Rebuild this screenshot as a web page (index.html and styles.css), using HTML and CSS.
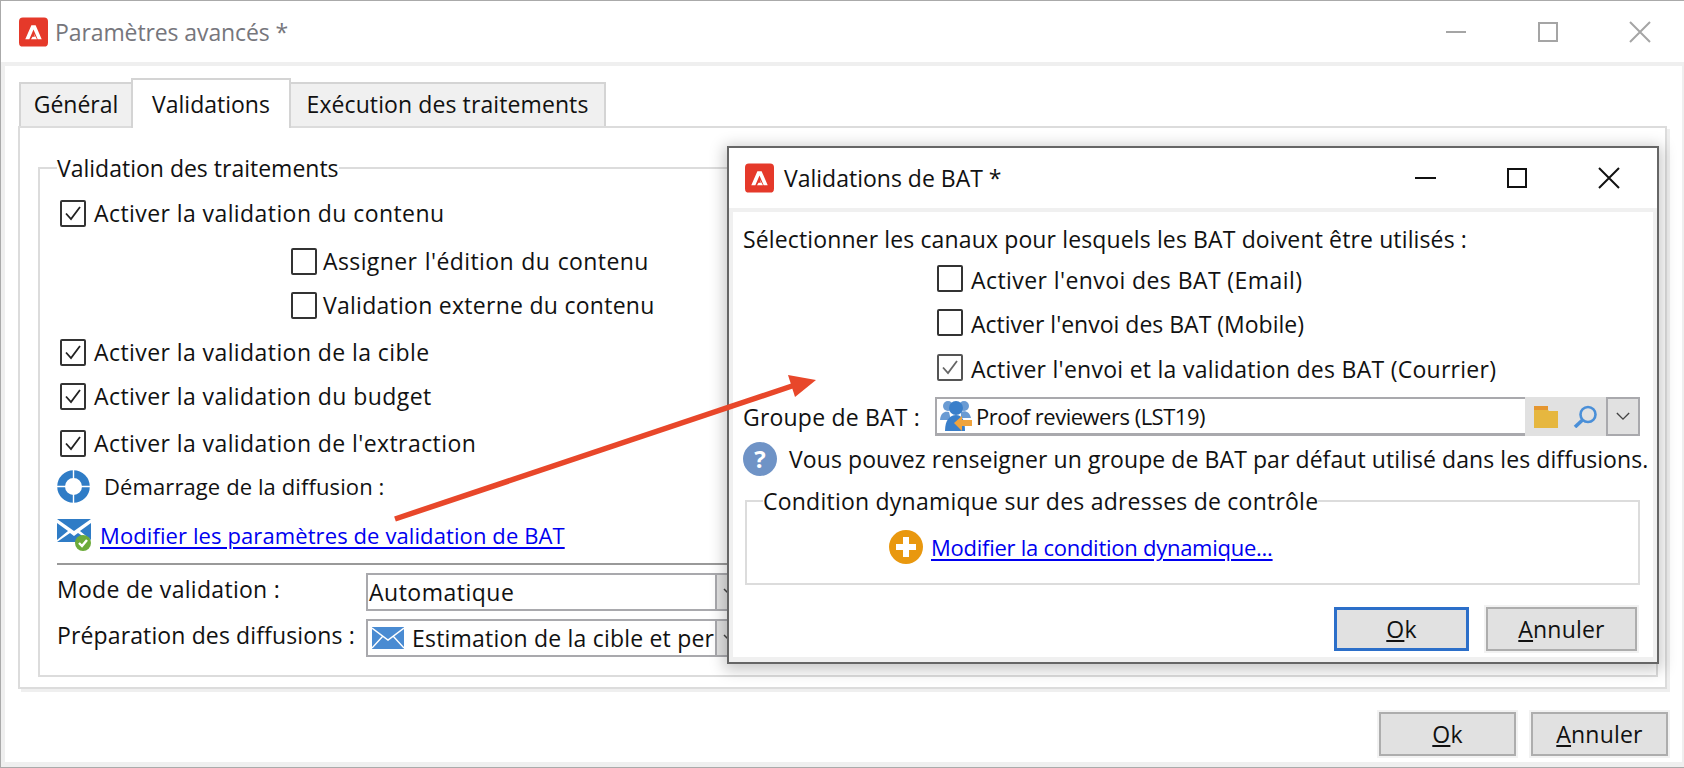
FILE: index.html
```html
<!DOCTYPE html>
<html lang="fr">
<head>
<meta charset="utf-8">
<title>Paramètres avancés</title>
<link rel="stylesheet" href="styles.css">
</head>
<body>
<div class="window">
  <header class="titlebar">
    <svg class="logo" viewBox="0 0 30 30"><rect width="30" height="30" rx="4" fill="#e5392a"/><path d="M12.8 8H17.2L23.5 22.5H19.3L15 12.5 10.7 22.5H6.5Z M15.2 16.5 18.6 22.5H12.4L14 19.8H16.4Z" fill="#fff"/></svg>
    <span class="title title-muted">Paramètres avancés *</span>
    <div class="controls controls-muted">
      <svg viewBox="0 0 20 20"><path d="M0 10H20"/></svg>
      <svg viewBox="0 0 20 20"><path d="M1 1H19V19H1Z"/></svg>
      <svg viewBox="0 0 20 20"><path d="M0 0L20 20M20 0L0 20"/></svg>
    </div>
  </header>

  <div class="content">
    <nav class="tabs">
      <div class="tab tab-general">Général</div>
      <div class="tab tab-active">Validations</div>
      <div class="tab tab-exec">Exécution des traitements</div>
    </nav>
    <section class="pane">
      <fieldset class="group group-main">
        <legend>Validation des traitements</legend>
        <div class="main-rows">
          <label class="row row-check"><span class="box"><svg viewBox="0 0 22 23"><path d="M4 11.5L9 17 18 5"/></svg></span>Activer la validation du contenu</label>
          <label class="row row-indent row-spaced"><span class="box"></span>Assigner l'édition du contenu</label>
          <label class="row row-indent row-loose"><span class="box"></span>Validation externe du contenu</label>
          <label class="row row-check"><span class="box"><svg viewBox="0 0 22 23"><path d="M4 11.5L9 17 18 5"/></svg></span>Activer la validation de la cible</label>
          <label class="row row-check"><span class="box"><svg viewBox="0 0 22 23"><path d="M4 11.5L9 17 18 5"/></svg></span>Activer la validation du budget</label>
          <label class="row row-check"><span class="box"><svg viewBox="0 0 22 23"><path d="M4 11.5L9 17 18 5"/></svg></span>Activer la validation de l'extraction</label>
          <div class="row row-icon">
            <svg class="ic-buoy" viewBox="0 0 33 33"><circle cx="16.5" cy="16.5" r="12.4" fill="none" stroke="#2f7cc6" stroke-width="7.8"/><path d="M16.5 0V9M16.5 24V33M0 16.5H9M24 16.5H33" stroke="#fff" stroke-width="1.4"/></svg>
            <span class="text-small">Démarrage de la diffusion :</span>
          </div>
          <div class="row row-link">
            <svg class="ic-mailok" viewBox="0 0 34 32"><path d="M0 0H34L17 12Z" fill="#2f7cc6"/><path d="M0 4L11 12 0 21ZM34 4V21L23 12Z" fill="#2f7cc6"/><path d="M0 23L13 14 17 17 21 14 27 18 20 23Z" fill="#2f7cc6"/><circle cx="26" cy="24" r="8" fill="#6cab3a"/><path d="M22 24L25 27 30 21" fill="none" stroke="#fff" stroke-width="2.4"/></svg>
            <a class="link text-small" href="#">Modifier les paramètres de validation de BAT</a>
          </div>
          <hr class="sep">
          <div class="row row-field">
            <span class="field-label">Mode de validation :</span>
            <div class="select"><span class="select-value select-value-wide">Automatique</span><span class="select-arrow"><svg viewBox="0 0 12 8"><path d="M1 1L6 6 11 1"/></svg></span></div>
          </div>
          <div class="row row-field">
            <span class="field-label field-label-tight">Préparation des diffusions :</span>
            <div class="select"><span class="select-value select-value-icon"><svg class="ic-mail" viewBox="0 0 32 22"><rect width="32" height="22" fill="#4a8bd2"/><path d="M0 1L16 13 32 1M0 21L11 9M32 21L21 9" fill="none" stroke="#fff" stroke-width="1.4"/></svg>Estimation de la cible et per</span><span class="select-arrow"><svg viewBox="0 0 12 8"><path d="M1 1L6 6 11 1"/></svg></span></div>
          </div>
        </div>
      </fieldset>
    </section>
    <footer class="actions actions-main">
      <button class="btn" type="button"><u>O</u>k</button>
      <button class="btn" type="button"><u>A</u>nnuler</button>
    </footer>
  </div>

  <div class="modal">
    <header class="titlebar titlebar-modal">
      <svg class="logo" viewBox="0 0 30 30"><rect width="30" height="30" rx="4" fill="#e5392a"/><path d="M12.8 8H17.2L23.5 22.5H19.3L15 12.5 10.7 22.5H6.5Z M15.2 16.5 18.6 22.5H12.4L14 19.8H16.4Z" fill="#fff"/></svg>
      <span class="title">Validations de BAT *</span>
      <div class="controls">
        <svg viewBox="0 0 20 20"><path d="M0 10H21"/></svg>
        <svg viewBox="0 0 20 20"><path d="M1 1H19V19H1Z"/></svg>
        <svg viewBox="0 0 20 20"><path d="M0 0L20 20M20 0L0 20"/></svg>
      </div>
    </header>
    <div class="modal-body">
      <div class="row row-intro">Sélectionner les canaux pour lesquels les BAT doivent être utilisés :</div>
      <label class="row row-channel row-check"><span class="box"></span>Activer l'envoi des BAT (Email)</label>
      <label class="row row-channel"><span class="box"></span>Activer l'envoi des BAT (Mobile)</label>
      <label class="row row-channel row-loose"><span class="box box-muted"><svg viewBox="0 0 22 23"><path d="M4 11.5L9 17 18 5"/></svg></span>Activer l'envoi et la validation des BAT (Courrier)</label>
      <div class="row row-lookup">
        <span class="lookup-label">Groupe de BAT :</span>
        <div class="lookup">
          <div class="lookup-input">
            <svg class="ic-group" viewBox="0 0 34 32"><circle cx="9" cy="6" r="5" fill="#6a9bd3"/><circle cx="25" cy="6" r="5" fill="#6a9bd3"/><path d="M1 20C2 12 6 11 10 12L12 20ZM22 12C27 10 31 13 32 18L22 18Z" fill="#6a9bd3"/><circle cx="17" cy="8" r="7" fill="#3a7fca"/><path d="M6 31C6 20 11 15 17 15 23 15 26 20 26 31Z" fill="#3a7fca"/><path d="M15 23L23 16V20H33V26H23V31Z" fill="#f0a33c"/></svg>
            <span class="text-proof">Proof reviewers (LST19)</span>
          </div>
          <div class="lookup-tools">
            <svg class="ic-folder" viewBox="0 0 24 22"><path d="M0 0H14V4H0Z" fill="#e5962f"/><path d="M0 4H14L15 5H24V22H0Z" fill="#e6b73f"/></svg>
            <svg class="ic-search" viewBox="0 0 25 23"><circle cx="15" cy="9.5" r="7.5" fill="none" stroke="#4a8fd8" stroke-width="2.6"/><path d="M9.5 15L2 22" stroke="#4a8fd8" stroke-width="3.6"/></svg>
          </div>
          <div class="lookup-arrow"><svg viewBox="0 0 16 10"><path d="M1 1L8 8 15 1"/></svg></div>
        </div>
      </div>
      <div class="row row-help"><span class="ic-help">?</span>Vous pouvez renseigner un groupe de BAT par défaut utilisé dans les diffusions.</div>
      <fieldset class="group group-dyn">
        <legend>Condition dynamique sur des adresses de contrôle</legend>
        <div class="row row-plus">
          <svg class="ic-plus" viewBox="0 0 34 34"><circle cx="17" cy="17" r="17" fill="#e9980f"/><path d="M17 7V27M7 17H27" stroke="#fff" stroke-width="6"/></svg>
          <a class="link text-cond" href="#">Modifier la condition dynamique...</a>
        </div>
      </fieldset>
      <footer class="actions actions-modal">
        <button class="btn btn-default" type="button"><u>O</u>k</button>
        <button class="btn btn-cancel" type="button"><u>A</u>nnuler</button>
      </footer>
    </div>
  </div>

  <svg class="arrow" viewBox="0 0 1684 768"><path d="M395 519L795 385" stroke="#e8472a" stroke-width="5.5" fill="none"/><path d="M816 380L788 375 795 397Z" fill="#e8472a"/></svg>
</div>
</body>
</html>
```

FILE: styles.css
```css
* { box-sizing: border-box; }
html, body { margin: 0; padding: 0; }
body {
  width: 1684px;
  height: 768px;
  overflow: hidden;
  background: #fff;
  color: #111;
  font-family: "Open Sans", "Noto Sans", sans-serif;
  font-size: 23px;
  line-height: 30px;
}
.window {
  position: relative;
  width: 1684px;
  height: 768px;
  display: flex;
  flex-direction: column;
  border-top: 1px solid #aaa;
  border-left: 1px solid #aaa;
  border-bottom: 1px solid #aaa;
  overflow: hidden;
}
.titlebar {
  flex: none;
  height: 61px;
  display: flex;
  align-items: center;
  padding: 0 34px 0 18px;
  background: #fff;
}
.logo { width: 29px; height: 30px; flex: none; }
.title { margin-left: 7px; }
.title-muted { color: #76767c; letter-spacing: -.1px; }
.controls { margin-left: auto; display: flex; gap: 72px; }
.controls svg { width: 20px; height: 20px; overflow: visible; fill: none; stroke: #111; stroke-width: 2; }
.controls-muted svg { stroke: #a5a5a5; }

.content {
  flex: 1;
  display: flex;
  flex-direction: column;
  padding: 12px 14px 0 13px;
  border: solid #efefef;
  border-width: 4px 2px 5px 4px;
}
.tabs {
  display: flex;
  align-items: flex-end;
  height: 50px;
  margin-left: 1px;
  margin-bottom: -2px;
  position: relative;
  z-index: 1;
}
.tab {
  height: 44px;
  margin-bottom: 2px;
  padding-bottom: 2px;
  display: flex;
  align-items: center;
  justify-content: center;
  background: #f0f0f0;
  border: 2px solid #d4d4d4;
  border-bottom: 0;
}
.tab-general { width: 112px; border-right: 0; }
.tab-exec { width: 315px; border-left: 0; letter-spacing: .1px; }
.tab-active {
  width: 160px;
  height: 50px;
  margin-bottom: 0;
  padding-bottom: 0;
  background: #fff;
}
.pane {
  width: 1649px;
  height: 563px;
  padding: 25px 7px 0 18px;
  border: 2px solid #dcdcdc;
  box-shadow: 3px 3px 0 #efefef;
  background: #fff;
}
.group {
  margin: 0;
  padding: 0;
  min-width: 0;
  border: 2px solid #dcdcdc;
}
.group legend { padding: 0; line-height: 30px; }
.group-main { height: 524px; }
.group-main legend { margin-left: 17px; }
.main-rows {
  display: grid;
  grid-template-rows: 48px 44px 47px 44px 47px 43px 49px 43px 10px 46px 38px;
  padding: 15px 0 0 17px;
}
.row { display: flex; align-items: center; height: 30px; white-space: nowrap; }
.row-check { letter-spacing: .42px; }
.row-loose { letter-spacing: .27px; }
.row-spaced { letter-spacing: .4px; word-spacing: 1px; }
.row-intro { letter-spacing: .13px; }
.text-small { font-size: 22px; letter-spacing: .1px; }
.text-proof { font-size: 22px; letter-spacing: -.5px; }
.text-cond { font-size: 22px; letter-spacing: -.26px; }
.box {
  flex: none;
  width: 26px;
  height: 27px;
  margin: 0 8px 0 3px;
  border: 2px solid #333;
  border-radius: 2px;
  background: #fff;
}
.box svg { display: block; width: 100%; height: 100%; fill: none; stroke: #222; stroke-width: 1.8; }
.box-muted { border-color: #555; }
.box-muted svg { stroke: #666; }
.row-indent { padding-left: 231px; }
.row-indent .box { margin-right: 6px; }
.row-icon { gap: 14px; }
.ic-buoy { width: 33px; height: 33px; flex: none; }
.row-link { gap: 9px; }
.ic-mailok { width: 34px; height: 32px; flex: none; }
.link {
  color: #0000f0;
  text-decoration: underline;
  text-decoration-thickness: 2px;
  text-underline-offset: 3px;
}
.sep { margin: 0; height: 2px; border: 0; background: #999; }
.row-field { align-items: flex-start; height: 38px; }
.field-label { flex: none; width: 309px; line-height: 32px; letter-spacing: .3px; }
.field-label-tight { letter-spacing: .13px; }
.select {
  flex: none;
  display: flex;
  width: 420px;
  height: 38px;
  border: 2px solid #a9a9ad;
  background: #fff;
}
.select-value {
  width: 347px;
  padding-left: 1px;
  line-height: 34px;
  overflow: hidden;
  white-space: nowrap;
  display: flex;
  align-items: center;
  letter-spacing: .2px;
}
.select-value-wide { letter-spacing: .5px; }
.select-value-icon { padding-left: 4px; gap: 8px; }
.ic-mail { width: 32px; height: 22px; flex: none; }
.select-arrow {
  flex: 1;
  padding-left: 6px;
  display: flex;
  align-items: center;
  background: #e1e1e1;
  border-left: 2px solid #a9a9ad;
}
.select-arrow svg { width: 12px; height: 8px; fill: none; stroke: #444; stroke-width: 1.5; }

.actions { display: flex; justify-content: flex-end; gap: 15px; }
.actions-main { padding-top: 23px; }
.btn {
  width: 137px;
  height: 44px;
  padding: 0;
  border: 2px solid #adadad;
  background: #e1e1e1;
  box-shadow: 0 0 0 2px #f2f2f2;
  color: #111;
  font: inherit;
  letter-spacing: .2px;
}

.modal {
  position: absolute;
  left: 726px;
  top: 145px;
  width: 932px;
  height: 518px;
  display: flex;
  flex-direction: column;
  border: 2px solid #666;
  background: #fff;
  box-shadow: 0 3px 14px 3px rgba(0, 0, 0, .22);
}
.titlebar-modal { height: 60px; padding: 0 38px 0 16px; }
.titlebar-modal .title { margin-left: 10px; }
.modal-body {
  flex: 1;
  display: grid;
  grid-template-rows: 41px 44px 45px 43px 47px 42px 121px 44px;
  padding: 12px 0 0 10px;
  border: solid #f0f0f0;
  border-width: 4px 4px 5px 4px;
}
.row-channel { padding-left: 191px; }
.row-channel .box { margin-right: 8px; margin-bottom: 4px; }
.row-lookup { height: 39px; letter-spacing: .2px; }
.lookup-label { flex: none; width: 192px; }
.lookup { display: flex; height: 39px; }
.lookup-input {
  width: 590px;
  display: flex;
  align-items: center;
  gap: 3px;
  padding-left: 2px;
  border: solid #a9a9ad;
  border-width: 2px 0 3px 2px;
  background: #fff;
}
.ic-group { width: 34px; height: 32px; flex: none; }
.lookup-tools {
  width: 81px;
  display: flex;
  align-items: center;
  padding-left: 9px;
  gap: 15px;
  background: #e1e1e1;
}
.ic-folder { width: 24px; height: 22px; flex: none; }
.ic-search { width: 25px; height: 23px; flex: none; }
.lookup-arrow {
  width: 34px;
  display: flex;
  align-items: center;
  justify-content: center;
  border: 2px solid #a9a9ad;
  background: #e1e1e1;
}
.lookup-arrow svg { width: 14px; height: 9px; fill: none; stroke: #444; stroke-width: 1.6; }
.row-help { gap: 12px; letter-spacing: .08px; }
.ic-help {
  flex: none;
  width: 34px;
  height: 34px;
  border-radius: 50%;
  background: #6f93c6;
  color: #fff;
  font-size: 24px;
  font-weight: 700;
  line-height: 34px;
  text-align: center;
}
.group-dyn { width: 895px; height: 99px; margin-left: 2px; }
.group-dyn legend { margin-left: 16px; letter-spacing: .23px; }
.row-plus { gap: 8px; margin: 16px 0 0 142px; }
.ic-plus { width: 34px; height: 34px; flex: none; }
.actions-modal { gap: 17px; padding-right: 16px; }
.btn-default { width: 135px; border: 3px solid #2c6fc9; box-shadow: none; }
.btn-cancel { width: 151px; }

.arrow {
  position: absolute;
  left: -1px;
  top: -1px;
  width: 1684px;
  height: 768px;
  pointer-events: none;
  z-index: 5;
}
```
